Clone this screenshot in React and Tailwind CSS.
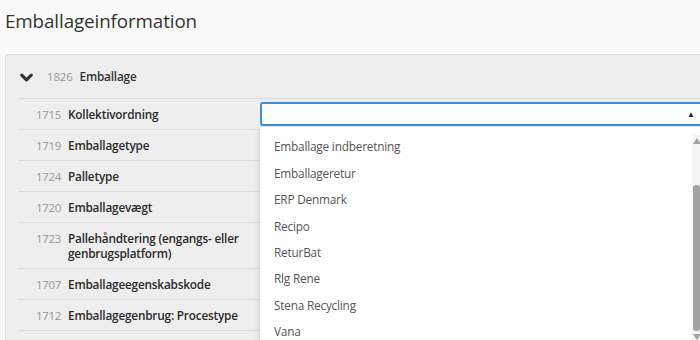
import { ChevronDown } from "lucide-react";

const rows = [
  { id: "1715", label: "Kollektivordning", select: true },
  { id: "1719", label: "Emballagetype" },
  { id: "1724", label: "Palletype" },
  { id: "1720", label: "Emballagevægt" },
  { id: "1723", label: "Pallehåndtering (engangs- eller genbrugsplatform)" },
  { id: "1707", label: "Emballageegenskabskode" },
  { id: "1712", label: "Emballagegenbrug: Procestype" },
  { id: "1713", label: "Emballagegenbrug: Type" },
];

const options = [
  "Emballage indberetning",
  "Emballageretur",
  "ERP Denmark",
  "Recipo",
  "ReturBat",
  "Rlg Rene",
  "Stena Recycling",
  "Vana",
];

export default function App() {
  return (
    <div className="relative w-[700px] h-[340px] overflow-hidden bg-[#fafafa] text-[#333] font-['Open_Sans',sans-serif]">
      {/* title */}
      <h1 className="pl-[5px] pt-[7px] h-[54px] text-[18.8px] tracking-[-0.1px] leading-[28px] text-[#333]">
        Emballageinformation
      </h1>

      {/* panel */}
      <div className="ml-[5px] w-[720px] rounded-t-[3px] border-t border-l border-[#e2e2e2] bg-[#eeeeee] pl-[12px]">
        <div className="h-[44px] pt-[1px] flex items-center border-b border-[#dcdcdc]">
          <ChevronDown className="w-[19px] h-[19px] ml-[-1px] text-[#333]" strokeWidth={4} />
          <span className="ml-[11px] text-[11.5px] tracking-[-0.2px] text-[#999]">1826</span>
          <span className="ml-[7px] text-[11.8px] tracking-[-0.2px] font-semibold text-[#333]">Emballage</span>
        </div>

        {rows.map((r) => (
          <div key={r.id} className="flex border-b border-[#dcdcdc]">
            <div className="w-[50px] shrink-0 pl-[18px] py-[7.5px] text-[11.5px] tracking-[-0.3px] leading-[15px] text-[#999]">
              {r.id}
            </div>
            <div className="w-[190px] shrink-0 py-[7.5px] text-[11.8px] tracking-[-0.2px] leading-[15px] font-semibold text-[#2b2b2b]">
              {r.label}
            </div>
            <div className="flex-1 pl-[2px] flex items-center">
              {r.select && (
                <div className="w-full h-[24px] rounded-[3px] border-2 border-[#3d8fd6] bg-white flex items-center justify-end pr-[20px]">
                  <span className="text-[8px] leading-none text-[#222] mr-[8px]">▲</span>
                </div>
              )}
            </div>
          </div>
        ))}
      </div>

      {/* open dropdown */}
      <div className="absolute left-[260px] top-[127px] w-[460px] h-[240px] bg-white shadow-[0_2px_6px_rgba(0,0,0,0.18)] pt-[7px]">
        {options.map((o) => (
          <div key={o} className="h-[26.4px] pl-[14px] flex items-center text-[11.8px] tracking-[-0.2px] text-[#555]">
            {o}
          </div>
        ))}
        {/* scrollbar */}
        <div className="absolute left-[432px] top-[8px] w-[9px] h-[210px] bg-[#f3f3f3] flex flex-col items-center">
          <div className="mt-[3px] w-0 h-0 border-l-[4px] border-r-[4px] border-b-[6px] border-l-transparent border-r-transparent border-b-[#a3a3a3]" />
          <div className="mt-[41px] w-[7px] h-[146px] rounded-[3px] bg-[#a3a3a3]" />
          <div className="mt-[3px] w-0 h-0 border-l-[4px] border-r-[4px] border-t-[6px] border-l-transparent border-r-transparent border-t-[#a3a3a3]" />
        </div>
      </div>
    </div>
  );
}
